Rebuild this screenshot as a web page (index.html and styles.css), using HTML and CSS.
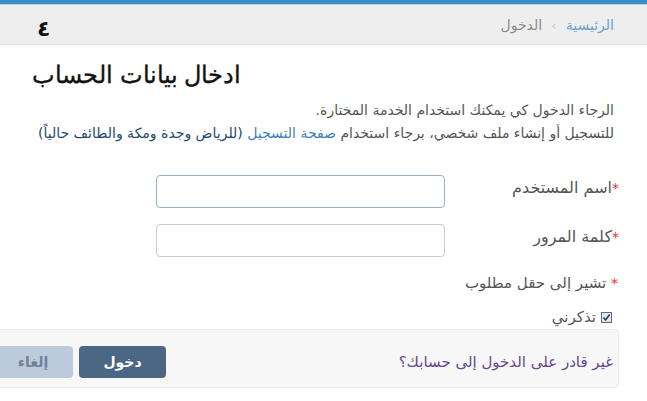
FILE: index.html
```html
<!DOCTYPE html>
<html lang="ar" dir="rtl">
<head>
  <meta charset="UTF-8">
  <meta name="viewport" content="width=device-width, initial-scale=1.0">
  <title>الدخول</title>
  <link rel="stylesheet" href="styles.css">
</head>
<body>
  <div class="topbar"></div>
  <div class="crumbs">
    <div class="trail">
      <a href="#" class="home">الرئيسية</a>
      <span class="sep">&rsaquo;</span>
      <span class="current">الدخول</span>
    </div>
    <span class="step">٤</span>
  </div>

  <div class="content">
    <h1>ادخال بيانات الحساب</h1>
    <p class="intro">
      الرجاء الدخول كي يمكنك استخدام الخدمة المختارة.<br>
      للتسجيل أو إنشاء ملف شخصي، برجاء استخدام <a href="#" class="reg">صفحة التسجيل</a> <span class="cities">(للرياض وجدة ومكة والطائف حالياً)</span>
    </p>

    <form class="login-form">
      <div class="row">
        <label for="username"><span class="req">*</span>اسم المستخدم</label>
        <input type="text" id="username" class="focused">
      </div>
      <div class="row">
        <label for="password"><span class="req">*</span>كلمة المرور</label>
        <input type="password" id="password">
      </div>
      <p class="note"><span class="req">*</span> تشير إلى حقل مطلوب</p>
      <label class="remember">
        <span class="box"><svg width="9" height="9" viewBox="0 0 9 9"><path d="M1.5 4.5 L3.6 7 L7.6 1.5" fill="none" stroke="#2a3f66" stroke-width="1.6"/></svg></span>
        تذكرني
      </label>
      <div class="actions">
        <a href="#" class="forgot">غير قادر على الدخول إلى حسابك؟</a>
        <div class="buttons">
          <button type="button" class="btn primary">دخول</button>
          <button type="button" class="btn cancel">إلغاء</button>
        </div>
      </div>
    </form>
  </div>
</body>
</html>
```

FILE: styles.css
```css
body {
  margin: 0;
  font-family: "DejaVu Sans", sans-serif;
  background-color: #fff;
  color: #555;
  overflow-x: hidden;
}

a {
  text-decoration: none;
}

.topbar {
  height: 4px;
  background-color: #3d8dc5;
  border-bottom: 1px solid #a6d5f2;
}

.crumbs {
  height: 39px;
  background-color: #efeeee;
  border-bottom: 1px solid #e4e4e4;
  display: flex;
  justify-content: space-between;
  align-items: center;
  padding: 0 33px 0 37px;
  font-size: 14px;
}

.crumbs .home {
  color: #6aa3cf;
}

.crumbs .sep {
  color: #c4c4c4;
  font-size: 12px;
  margin: 0 5px;
}

.crumbs .current {
  color: #8a8a8a;
}

.step {
  font-size: 22px;
  font-weight: bold;
  color: #111;
  line-height: 1;
  padding-top: 8px;
}

.content {
  padding: 0 28px 0 0;
}

h1 {
  text-align: left;
  margin: 14px 0 0 32px;
  font-family: "Liberation Sans", Arial, sans-serif;
  font-weight: normal;
  font-size: 24px;
  line-height: 32px;
  color: #111;
  -webkit-text-stroke: 0.3px #111;
}

.intro {
  margin: 8px 5px 0 0;
  font-size: 14px;
  line-height: 23px;
}

.reg {
  color: #3f7fbd;
}

.cities {
  color: #22496f;
}

.login-form {
  margin-top: 30px;
}

.row {
  display: flex;
  align-items: center;
  margin-bottom: 16px;
}

.row label {
  width: 160px;
  font-size: 16px;
  color: #555;
  padding-bottom: 9px;
}

.req {
  color: #d33;
  font-size: 14px;
}

.row input {
  width: 289px;
  height: 33px;
  box-sizing: border-box;
  border: 1px solid #ccc;
  border-radius: 4px;
  margin-right: 14px;
}

.row input.focused {
  border-color: #98b0c8;
}

.note {
  margin: 6px 1px 0 0;
  font-size: 15px;
  line-height: 20px;
  color: #555;
}

.remember {
  display: flex;
  align-items: center;
  gap: 5px;
  margin: 16px 7px 0 0;
  font-size: 15px;
  line-height: 16px;
}

.box {
  width: 9px;
  height: 9px;
  border: 1px solid #666;
  background: #dfe8f3;
  display: flex;
}

.actions {
  display: flex;
  justify-content: space-between;
  align-items: center;
  margin: 4px 0 0 -26px;
  padding: 15px 5px 9px 18px;
  height: 33px;
  background-color: #f7f7f8;
  border: 1px solid #ebebeb;
  border-radius: 4px;
}

.forgot {
  color: #65498c;
  font-size: 15px;
}

.buttons {
  display: flex;
  gap: 6px;
}

.btn {
  border: none;
  border-radius: 4px;
  height: 32px;
  font-family: "DejaVu Sans", sans-serif;
  font-size: 14px;
  font-weight: bold;
  cursor: pointer;
}

.primary {
  width: 87px;
  background-color: #4c6784;
  color: #fff;
}

.cancel {
  width: 80px;
  background-color: #bccbdb;
  color: #6d8199;
}
```
